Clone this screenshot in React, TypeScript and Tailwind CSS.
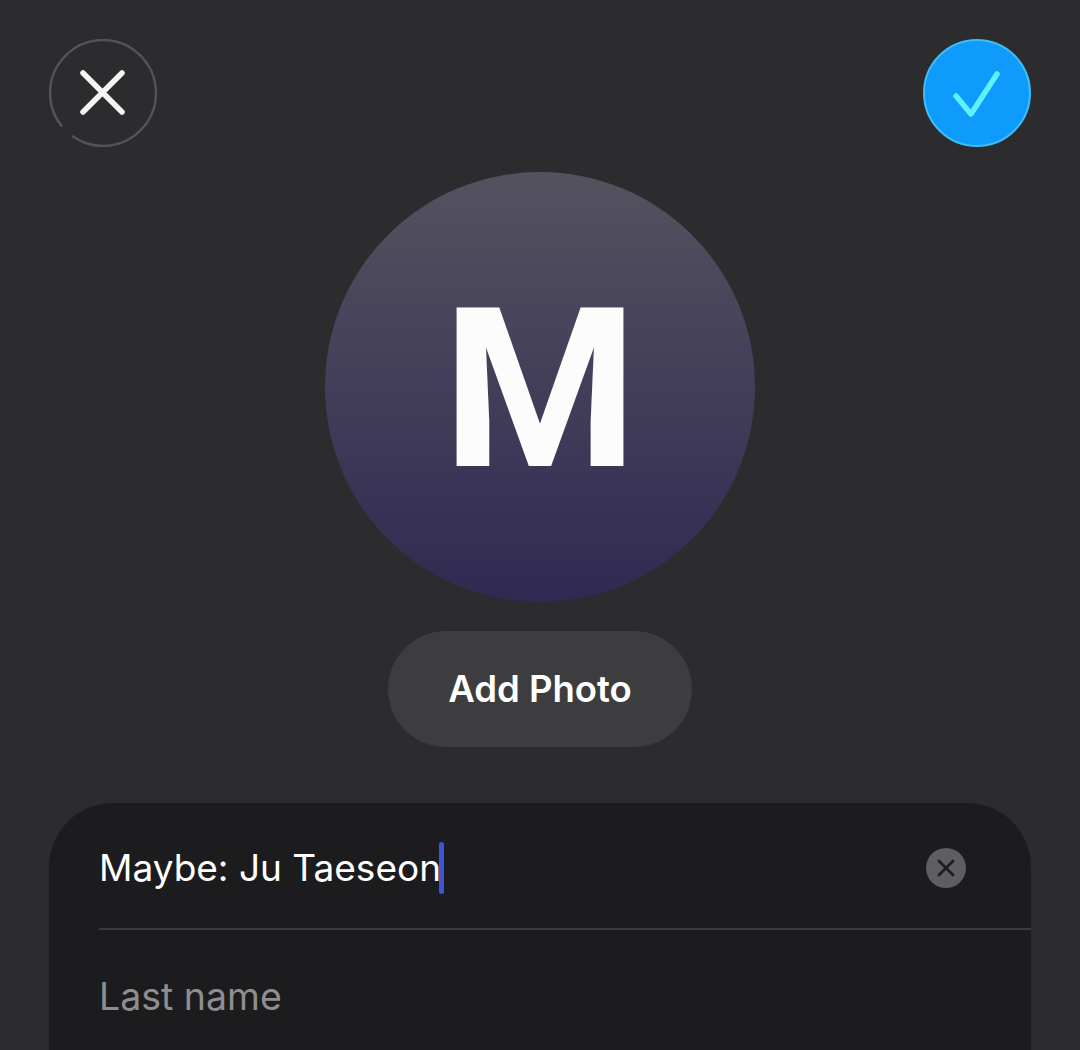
const FONT = "font-['Inter','Noto_Sans',sans-serif]";

function CloseButton() {
  return (
    <button className="flex h-[108px] w-[108px] items-center justify-center">
      <svg width="108" height="108" viewBox="0 0 108 108" fill="none">
        <circle cx="54" cy="54" r="53" stroke="#545456" strokeWidth="2.5" strokeDasharray="116 14 203" />
        <path d="M34 34L73 73M73 34L34 73" stroke="#f5f5f5" strokeWidth="5.5" strokeLinecap="round" />
      </svg>
    </button>
  );
}

function ConfirmButton() {
  return (
    <button className="flex h-[108px] w-[108px] items-center justify-center rounded-full border-2 border-[#3fbdf5] bg-[#0f9bfb]">
      <svg width="50" height="48" viewBox="0 0 50 48" fill="none">
        <path d="M4 27L19 45L45 5" stroke="#5ef0fb" strokeWidth="5.5" strokeLinecap="round" strokeLinejoin="round" />
      </svg>
    </button>
  );
}

export default function App() {
  return (
    <div className={`${FONT} flex h-[1050px] w-[1080px] flex-col overflow-hidden bg-[#2c2c2e]`}>
      <div className="flex justify-between px-[49px] pt-[39px]">
        <CloseButton />
        <ConfirmButton />
      </div>

      <div className="mt-[25px] flex flex-col items-center">
        <div className="flex h-[430px] w-[430px] items-center justify-center rounded-full bg-gradient-to-b from-[#55525f] to-[#302a52] pt-[5px]">
          <span className="font-['Roboto',sans-serif] text-[223px] leading-none font-bold text-[#fdfcfd]">M</span>
        </div>
        <button className="mt-[29px] h-[116px] w-[304px] rounded-full bg-[#3d3d3f] text-[36.5px] font-[560] text-white">
          Add Photo
        </button>
      </div>

      <div className="mt-[56px] ml-[49px] w-[982px] flex-1 rounded-t-[64px] bg-[#1c1c1e]">
        <div className="ml-[50px] flex h-[127px] items-center justify-between border-b-2 border-[#3a3a3c] pt-[5px] pr-[65px]">
          <div className="flex items-center">
            <span className="text-[37px] text-white">Maybe: Ju Taeseon</span>
            <span className="-ml-[2px] h-[52px] w-[5px] rounded-full bg-[#3b55d8]" />
          </div>
          <div className="flex h-[40px] w-[40px] items-center justify-center rounded-full bg-[#5e5e60]">
            <svg width="18" height="18" viewBox="0 0 18 18" fill="none">
              <path d="M2 2L16 16M16 2L2 16" stroke="#1c1c1e" strokeWidth="2.6" strokeLinecap="round" />
            </svg>
          </div>
        </div>
        <div className="ml-[50px] flex h-[134px] items-center">
          <span className="text-[37.5px] text-[#8e8e90]">Last name</span>
        </div>
      </div>
    </div>
  );
}
